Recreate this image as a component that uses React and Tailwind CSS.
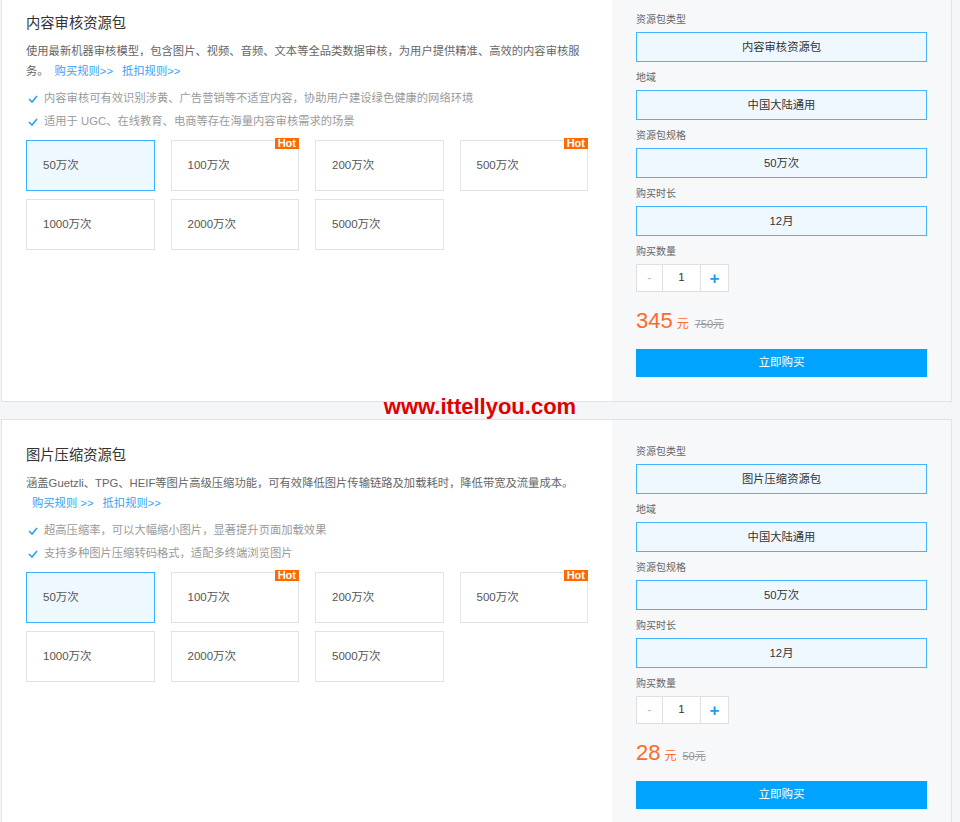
import React from "react";

const FONT = { fontFamily: '"Liberation Sans", "Noto Sans CJK SC", sans-serif' };

const OPTIONS = [
  { label: "50万次", selected: true },
  { label: "100万次", hot: true },
  { label: "200万次" },
  { label: "500万次", hot: true },
  { label: "1000万次" },
  { label: "2000万次" },
  { label: "5000万次" },
];

function Check() {
  return (
    <svg width="10" height="8" viewBox="0 0 10 8" className="mr-[6px] shrink-0">
      <polyline points="1,4 4,7 9,1" fill="none" stroke="#2a9ff0" strokeWidth="1.6" />
    </svg>
  );
}

function Field({ label, value }) {
  return (
    <div className="mb-[8px]">
      <div className="text-[10px] leading-4 text-[#666] mb-[4px]">{label}</div>
      <div className="h-[30px] border border-[#45b4ff] bg-[#f0f8ff] flex items-center justify-center text-[11.3px] text-[#333]">
        {value}
      </div>
    </div>
  );
}

function Card({ title, descBlock, features, type, price, orig }) {
  return (
    <div className="ml-px w-[951px] flex border border-[#e3e3e3] bg-white">
      <div className="w-[610px] pl-[24px] pt-[25px]">
        <div className="text-[14.3px] leading-5 text-[#333]">{title}</div>
        <div className="mt-[8px] w-[562px] text-[11.3px] leading-5 text-[#666]">{descBlock}</div>
        <div className="mt-[6px]">
          {features.map((f) => (
            <div key={f} className="flex items-center h-[23px] pl-[2px] text-[11.3px] text-[#9a9a9a]">
              <Check />
              <span>{f}</span>
            </div>
          ))}
        </div>
        <div className="mt-[7px] w-[562px] grid grid-cols-4 gap-x-4 gap-y-2">
          {OPTIONS.map((o) => (
            <div
              key={o.label}
              className={
                "relative h-[51px] flex items-center pl-4 text-[11.5px] text-[#555] border " +
                (o.selected ? "border-[#3ab0ff] bg-[#eef8ff]" : "border-[#e2e2e2] bg-white")
              }
            >
              {o.label}
              {o.hot && (
                <span className="absolute right-[-1px] top-[-3px] h-[11px] px-[3px] bg-[#ff6a00] text-white text-[11px] leading-[11px] font-bold">
                  Hot
                </span>
              )}
            </div>
          ))}
        </div>
      </div>
      <div className="w-[339px] bg-[#f7f8fa] pl-[24px] pr-[24px] pt-[24px] pb-[24px]">
        <Field label="资源包类型" value={type} />
        <Field label="地域" value="中国大陆通用" />
        <Field label="资源包规格" value="50万次" />
        <Field label="购买时长" value="12月" />
        <div className="text-[10px] leading-4 text-[#666] mb-[4px]">购买数量</div>
        <div className="flex h-[28px] w-[93px] border border-[#e0e0e0] bg-white">
          <div className="w-[26px] border-r border-[#e0e0e0] flex items-center justify-center text-[13px] text-[#bbb]">-</div>
          <div className="w-[38px] border-r border-[#e0e0e0] flex items-center justify-center text-[11.5px] text-[#333]">1</div>
          <div className="flex-1 flex items-center justify-center text-[17px] font-bold text-[#1e9cf0] leading-none">+</div>
        </div>
        <div className="mt-[15px] h-[28px] flex items-baseline">
          <span className="text-[22px] leading-[28px] text-[#ff6a2b]">{price}</span>
          <span className="ml-[4px] text-[12px] text-[#ff6a2b]">元</span>
          <span className="ml-[6px] text-[11px] text-[#999] line-through">{orig}</span>
        </div>
        <div className="mt-[14px] h-[28px] bg-[#00a4ff] flex items-center justify-center text-white text-[11.5px]">
          立即购买
        </div>
      </div>
    </div>
  );
}

export default function App() {
  return (
    <div style={FONT} className="h-[822px] overflow-hidden bg-[#f5f6f8]">
      <div className="-mt-[13px]">
        <Card
          title="内容审核资源包"
          descBlock={
            <>
              <div>使用最新机器审核模型，包含图片、视频、音频、文本等全品类数据审核，为用户提供精准、高效的内容审核服</div>
              <div>
                务。
                <span className="ml-[6px] text-[#3a9ff5]">购买规则&gt;&gt;</span>
                <span className="ml-[9px] text-[#3a9ff5]">抵扣规则&gt;&gt;</span>
              </div>
            </>
          }
          features={[
            "内容审核可有效识别涉黄、广告营销等不适宜内容，协助用户建设绿色健康的网络环境",
            "适用于 UGC、在线教育、电商等存在海量内容审核需求的场景",
          ]}
          type="内容审核资源包"
          price="345"
          orig="750元"
        />
        <div className="relative h-[17px]">
          <div className="absolute inset-x-0 top-[-6px] h-[22px] text-center text-[22px] leading-[22px] font-bold text-[#e00000] z-10">
            www.ittellyou.com
          </div>
        </div>
        <Card
          title="图片压缩资源包"
          descBlock={
            <>
              <div>涵盖Guetzli、TPG、HEIF等图片高级压缩功能，可有效降低图片传输链路及加载耗时，降低带宽及流量成本。</div>
              <div className="pl-[6px]">
                <span className="text-[#3a9ff5]">购买规则 &gt;&gt;</span>
                <span className="ml-[9px] text-[#3a9ff5]">抵扣规则&gt;&gt;</span>
              </div>
            </>
          }
          features={["超高压缩率，可以大幅缩小图片，显著提升页面加载效果", "支持多种图片压缩转码格式，适配多终端浏览图片"]}
          type="图片压缩资源包"
          price="28"
          orig="50元"
        />
      </div>
    </div>
  );
}
